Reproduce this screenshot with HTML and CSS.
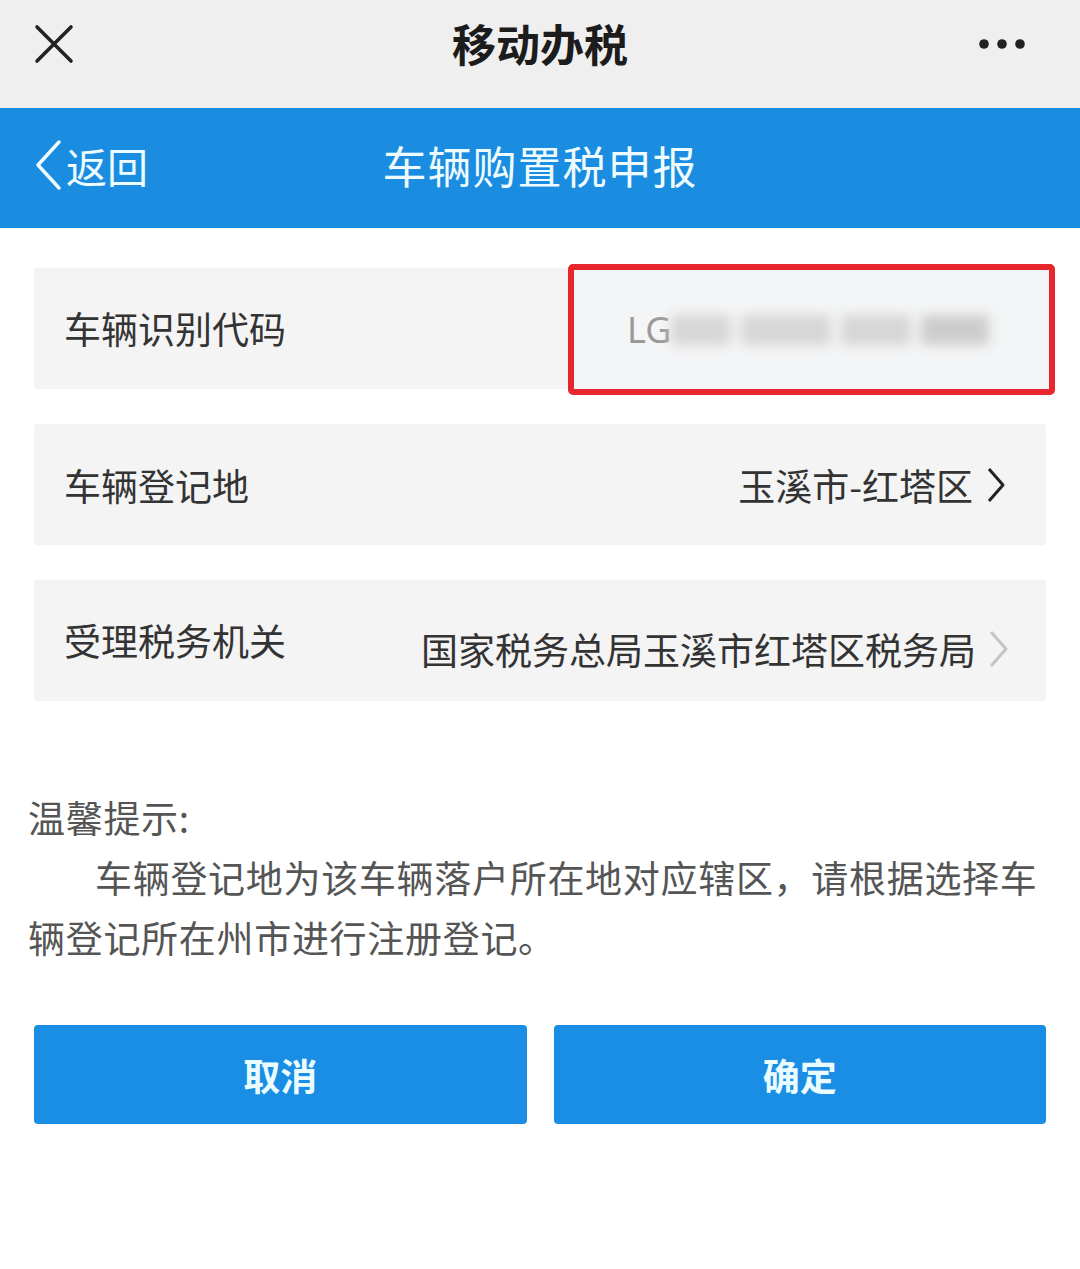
FILE: index.html
```html
<!DOCTYPE html>
<html lang="zh-CN">
<head>
<meta charset="utf-8">
<title>移动办税</title>
<link rel="stylesheet" href="styles.css">
</head>
<body>
<div class="topbar">
  <svg class="close" width="40" height="40" viewBox="0 0 40 40"><path d="M3 3 L37 37 M37 3 L3 37" stroke="#222" stroke-width="3.6" stroke-linecap="round" fill="none"/></svg>
  <div class="apptitle">移动办税</div>
  <svg class="more" width="50" height="12" viewBox="0 0 50 12"><circle cx="6" cy="6" r="4.8" fill="#222"/><circle cx="24" cy="6" r="4.8" fill="#222"/><circle cx="42" cy="6" r="4.8" fill="#222"/></svg>
</div>
<div class="navbar">
  <div class="back">
    <svg width="28" height="50" viewBox="0 0 28 50"><path d="M25 2 L4 25 L25 48" stroke="#eefcff" stroke-width="3.4" fill="none" stroke-linejoin="round" stroke-linecap="round"/></svg>
    <span>返回</span>
  </div>
  <div class="navtitle">车辆购置税申报</div>
</div>
<div class="content">
  <div class="row row-vin">
    <span class="label">车辆识别代码</span>
    <div class="mark">
      <span class="vin">LG</span>
      <span class="blur b1"></span><span class="blur b2"></span><span class="blur b3"></span><span class="blur b4"></span>
    </div>
  </div>
  <div class="row">
    <span class="label">车辆登记地</span>
    <div class="value">
      <span>玉溪市-红塔区</span>
      <svg width="20" height="36" viewBox="0 0 20 36"><path d="M3 2 L17 18 L3 34" stroke="#222" stroke-width="3" fill="none" stroke-linejoin="round"/></svg>
    </div>
  </div>
  <div class="row row-office">
    <span class="label">受理税务机关</span>
    <div class="value value-low">
      <span>国家税务总局玉溪市红塔区税务局</span>
      <svg width="22" height="38" viewBox="0 0 22 38"><path d="M3 2 L18 19 L3 36" stroke="#c4c4c4" stroke-width="3" fill="none" stroke-linejoin="round"/></svg>
    </div>
  </div>
  <div class="tips">
    <div>温馨提示:</div>
    <p>车辆登记地为该车辆落户所在地对应辖区，请根据选择车辆登记所在州市进行注册登记。</p>
  </div>
  <div class="buttons">
    <div class="btn">取消</div>
    <div class="btn">确定</div>
  </div>
</div>
</body>
</html>
```
FILE: styles.css
```css
html, body {
  margin: 0;
  padding: 0;
  background: #ffffff;
  font-family: "Noto Sans CJK SC", "Noto Sans", sans-serif;
}
body {
  width: 1080px;
  height: 1269px;
  overflow: hidden;
}
.topbar {
  height: 108px;
  background: #efefef;
  display: flex;
  align-items: center;
  justify-content: space-between;
  padding: 0 52px 0 34px;
  box-sizing: border-box;
  position: relative;
}
.close {
  margin-top: -20px;
}
.apptitle {
  position: absolute;
  left: 0;
  right: 0;
  top: 16px;
  text-align: center;
  font-size: 44px;
  line-height: 54px;
  font-weight: 700;
  color: #1c1c1c;
  pointer-events: none;
}
.more {
  margin-top: -20px;
}
.navbar {
  height: 120px;
  background: #1a8de1;
  position: relative;
  display: flex;
  align-items: center;
  padding-left: 34px;
}
.back {
  display: flex;
  align-items: center;
  color: #eefcff;
  font-size: 41px;
  gap: 4px;
  margin-top: -6px;
}
.back span {
  line-height: 50px;
}
.navtitle {
  position: absolute;
  left: 0;
  right: 0;
  top: 27px;
  text-align: center;
  font-size: 44px;
  line-height: 60px;
  color: #eefcff;
  letter-spacing: 1px;
}
.content {
  padding: 40px 34px 0;
}
.row {
  height: 121px;
  background: #f4f4f4;
  border-radius: 4px;
  display: flex;
  align-items: center;
  justify-content: space-between;
  padding: 0 40px 0 30px;
  margin-bottom: 35px;
  position: relative;
  box-shadow: 0 0 2px rgba(0,0,0,0.04);
}
.label {
  font-size: 37px;
  color: #333;
  line-height: 50px;
}
.row-vin .label {
  margin-top: -2px;
}
.row-office .label {
  margin-top: -2px;
}
.value {
  display: flex;
  align-items: center;
  gap: 13px;
  font-size: 37px;
  color: #333;
  line-height: 50px;
}
.value-low {
  margin-top: 16px;
  gap: 12px;
  margin-right: -4px;
}
.mark {
  position: absolute;
  left: 534px;
  top: -4px;
  width: 487px;
  height: 131px;
  box-sizing: border-box;
  border: 6px solid #e8262d;
  border-radius: 5px;
  background: #f4f5f6;
  display: flex;
  align-items: center;
  padding-left: 53px;
}
.vin {
  font-family: "Noto Sans", sans-serif;
  font-size: 36px;
  color: #9a9a9a;
  line-height: 50px;
}
.blur {
  display: inline-block;
  height: 30px;
  background: #d6d6d6;
  filter: blur(6px);
  margin-left: 10px;
}
.b1 { width: 60px; margin-left: 0; }
.b2 { width: 90px; }
.b3 { width: 70px; }
.b4 { width: 68px; background: #cccccc; }
.tips {
  margin: 86px -6px 0;
  font-size: 37px;
  line-height: 60px;
  color: #555;
  letter-spacing: 0.7px;
}
.tips p {
  margin: 0;
  text-indent: 67px;
}
.buttons {
  display: flex;
  gap: 27px;
  margin-top: 58px;
}
.btn {
  flex: 1;
  height: 99px;
  background: #1a8de4;
  border-radius: 4px;
  color: #eafcff;
  font-size: 37px;
  font-weight: 700;
  display: flex;
  align-items: center;
  justify-content: center;
}
```
